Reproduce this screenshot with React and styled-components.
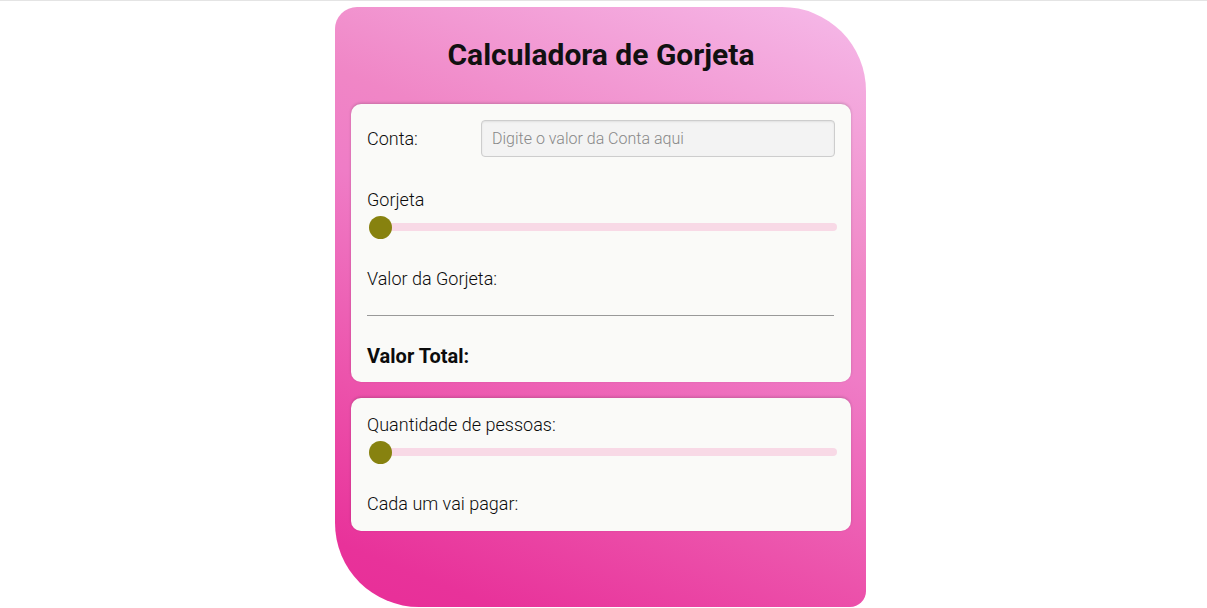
import React from 'react';
import styled, { createGlobalStyle } from 'styled-components';

const GlobalStyle = createGlobalStyle`
  body {
    margin: 0;
    border-top: 1px solid #e4e4e4;
    background: #ffffff;
    font-family: Roboto, "Liberation Sans", sans-serif;
  }
`;

const Page = styled.div`
  display: flex;
  justify-content: center;
  padding: 6px 6px 0 0;
`;

const Card = styled.div`
  width: 531px;
  height: 600px;
  box-sizing: border-box;
  padding: 17px 15px 0 16px;
  border-radius: 22px 84px 16px 84px;
  background: linear-gradient(
    202deg,
    #f7bce9 0%,
    #f5b4e5 4%,
    #f086c6 34%,
    #ef7cc6 46%,
    #ec52ab 72%,
    #e8329a 92%,
    #e82e98 100%
  );
  display: flex;
  flex-direction: column;
`;

const Title = styled.h1`
  margin: 13px 0 31px;
  text-align: center;
  font-size: 30px;
  font-weight: 700;
  color: #111;
  line-height: 36px;
`;

const Panel = styled.div`
  background: #fafaf8;
  border-radius: 10px;
  box-shadow: 0 -1px 3px rgba(0, 0, 0, 0.18);
  padding: 16px 16px 0 16px;
  height: ${p => p.$h}px;
  box-sizing: border-box;
  margin-bottom: 16px;
  display: flex;
  flex-direction: column;
`;

const Row = styled.div`
  display: flex;
  align-items: center;
`;

const Label = styled.span`
  font-size: 18px;
  font-weight: 300;
  color: #0c0c0c;
  line-height: 22px;
  width: ${p => (p.$w ? `${p.$w}px` : 'auto')};
  margin-top: ${p => p.$mt || 0}px;
`;

const Strong = styled.span`
  font-size: 20px;
  font-weight: 700;
  color: #0c0c0c;
  line-height: 22px;
  margin-top: ${p => p.$mt || 0}px;
`;

const Input = styled.input`
  flex: 1;
  height: 37px;
  box-sizing: border-box;
  border: 1px solid #cdcdcd;
  border-radius: 4px;
  background: #f3f3f3;
  box-shadow: inset 0 1px 2px rgba(0, 0, 0, 0.08);
  padding: 0 10px;
  font-family: Roboto, "Liberation Sans", sans-serif;
  font-size: 16px;
  font-weight: 300;
  &::placeholder {
    color: #888;
  }
`;

const Range = styled.input`
  -webkit-appearance: none;
  appearance: none;
  width: 468px;
  height: 8px;
  margin: ${p => p.$mt || 0}px 0 0 2px;
  border-radius: 4px;
  background: #f8d9e6;
  outline: none;
  &::-webkit-slider-thumb {
    -webkit-appearance: none;
    width: 23px;
    height: 23px;
    border-radius: 50%;
    background: #87820f;
    cursor: pointer;
  }
`;

const Divider = styled.hr`
  border: none;
  border-top: 1px solid #999;
  margin: 25px 1px 0 0;
`;

export default function App() {
  return (
    <>
      <GlobalStyle />
      <Page>
        <Card>
          <Title>Calculadora de Gorjeta</Title>
          <Panel $h={278}>
            <Row>
              <Label $w={114}>Conta:</Label>
              <Input placeholder="Digite o valor da Conta aqui" />
            </Row>
            <Label $mt={32}>Gorjeta</Label>
            <Range type="range" min="0" max="100" defaultValue="0" $mt={12} />
            <Label $mt={37}>Valor da Gorjeta:</Label>
            <Divider />
            <Strong $mt={29}>Valor Total:</Strong>
          </Panel>
          <Panel $h={133}>
            <Label>Quantidade de pessoas:</Label>
            <Range type="range" min="1" max="20" defaultValue="1" $mt={12} />
            <Label $mt={37}>Cada um vai pagar:</Label>
          </Panel>
        </Card>
      </Page>
    </>
  );
}
